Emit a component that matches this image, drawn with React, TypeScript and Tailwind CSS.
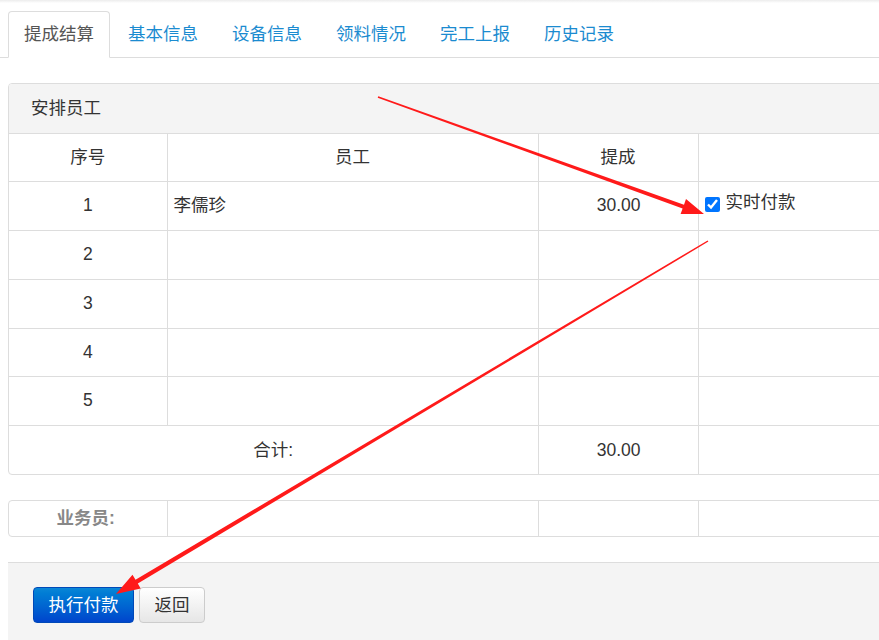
import React from 'react';

const FONT = '"Liberation Sans", "Noto Sans CJK SC", sans-serif';

const TABS = ['提成结算', '基本信息', '设备信息', '领料情况', '完工上报', '历史记录'];

type Pt = [number, number];

// tapered annotation arrow: thin at the tail, thick at the head
function arrowPoints(s: Pt, e: Pt, w0: number, w1: number, headLen: number, headHalf: number) {
  const dx = e[0] - s[0];
  const dy = e[1] - s[1];
  const len = Math.hypot(dx, dy);
  const ux = dx / len;
  const uy = dy / len;
  const nx = -uy;
  const ny = ux;
  const bx = e[0] - ux * headLen;
  const by = e[1] - uy * headLen;
  const pts: Pt[] = [
    [s[0] + nx * w0 / 2, s[1] + ny * w0 / 2],
    [bx + nx * w1 / 2, by + ny * w1 / 2],
    [bx + nx * headHalf, by + ny * headHalf],
    [e[0], e[1]],
    [bx - nx * headHalf, by - ny * headHalf],
    [bx - nx * w1 / 2, by - ny * w1 / 2],
    [s[0] - nx * w0 / 2, s[1] - ny * w0 / 2],
  ];
  return pts.map(p => `${p[0].toFixed(1)},${p[1].toFixed(1)}`).join(' ');
}

function Cell({ children, className = '', colSpan }: { children?: React.ReactNode; className?: string; colSpan?: number }) {
  return (
    <td colSpan={colSpan} className={`border-[#ddd] text-[17.5px] text-[#333] ${className}`}>
      {children}
    </td>
  );
}

function Cols() {
  return (
    <colgroup>
      <col className="w-[158px]" />
      <col className="w-[371px]" />
      <col className="w-[160px]" />
      <col />
    </colgroup>
  );
}

const ROW_H = ['h-[49px]', 'h-[49px]', 'h-[49px]', 'h-[48px]', 'h-[49px]'];

export default function App() {
  const rows = [1, 2, 3, 4, 5];

  return (
    <div className="relative w-[879px] h-[640px] overflow-hidden bg-white" style={{ fontFamily: FONT }}>
      <div className="h-[3px] bg-gradient-to-b from-[#ececec] to-white" />

      {/* Tabs */}
      <div className="mt-[8px] flex border-b border-[#ddd] pl-[8px]">
        {TABS.map((t, i) => (
          <div
            key={t}
            className={`-mb-px mr-[2px] flex h-[47px] items-center rounded-t-[4px] border px-[15px] text-[17.5px] ${
              i === 0 ? 'border-[#ddd] border-b-white bg-white text-[#555]' : 'border-transparent text-[#1b8bd0]'
            }`}
          >
            {t}
          </div>
        ))}
      </div>

      {/* Panel */}
      <div className="ml-[8px] mt-[25px] w-[960px] overflow-hidden rounded-[4px] border border-[#ddd]">
        <div className="flex h-[50px] items-center border-b border-[#ddd] bg-[#f4f4f4] pl-[22px] text-[17.5px] text-[#333]">
          安排员工
        </div>
        <table className="w-full table-fixed border-collapse">
          <Cols />
          <tbody>
            <tr className="h-[47px]">
              <Cell className="border-b text-center">序号</Cell>
              <Cell className="border-b border-l text-center">员工</Cell>
              <Cell className="border-b border-l text-center">提成</Cell>
              <Cell className="border-b border-l" />
            </tr>
            {rows.map((n, i) => (
              <tr key={n} className={ROW_H[i]}>
                <Cell className="border-b text-center">{n}</Cell>
                <Cell className="border-b border-l pl-[6px]">{n === 1 ? '李儒珍' : ''}</Cell>
                <Cell className="border-b border-l pr-[57px] text-right">{n === 1 ? '30.00' : ''}</Cell>
                <Cell className="border-b border-l pl-[6px]">
                  {n === 1 && (
                    <label className="flex items-center gap-[6px] pb-[2px]">
                      <input type="checkbox" checked readOnly className="h-[15px] w-[15px] accent-[#0075ff]" />
                      <span className="-mt-[4px]">实时付款</span>
                    </label>
                  )}
                </Cell>
              </tr>
            ))}
            <tr className="h-[49px]">
              <Cell colSpan={2} className="text-center">合计:</Cell>
              <Cell className="border-l pr-[57px] text-right">30.00</Cell>
              <Cell className="border-l" />
            </tr>
          </tbody>
        </table>
      </div>

      {/* Salesman */}
      <div className="ml-[8px] mt-[25px] w-[960px] overflow-hidden rounded-[4px] border border-[#ddd]">
        <table className="w-full table-fixed border-collapse">
          <Cols />
          <tbody>
            <tr className="h-[35px]">
              <Cell className="pr-[4px] text-center font-bold !text-[#888]">业务员:</Cell>
              <Cell className="border-l" />
              <Cell className="border-l" />
              <Cell className="border-l" />
            </tr>
          </tbody>
        </table>
      </div>

      {/* Footer */}
      <div className="ml-[8px] mt-[25px] h-[100px] border-t border-[#ddd] bg-[#f4f4f4] pl-[25px] pt-[24px]">
        <div className="flex gap-[5px]">
          <button className="h-[36px] w-[101px] rounded-[4px] border border-[#0049b8] bg-gradient-to-b from-[#0a86d6] to-[#0044cc] text-[17.5px] text-white">
            执行付款
          </button>
          <button className="h-[36px] w-[66px] rounded-[4px] border border-[#ccc] bg-gradient-to-b from-white to-[#e6e6e6] text-[17.5px] text-[#333]">
            返回
          </button>
        </div>
      </div>

      {/* annotation arrows */}
      <svg className="pointer-events-none absolute left-0 top-0" width={879} height={640}>
        <polygon points={arrowPoints([378, 97], [704, 214], 1.5, 4, 22, 8)} fill="#ff1a1a" />
        <polygon points={arrowPoints([708, 241], [116, 594], 1.5, 4.5, 24, 8)} fill="#ff1a1a" />
      </svg>
    </div>
  );
}
